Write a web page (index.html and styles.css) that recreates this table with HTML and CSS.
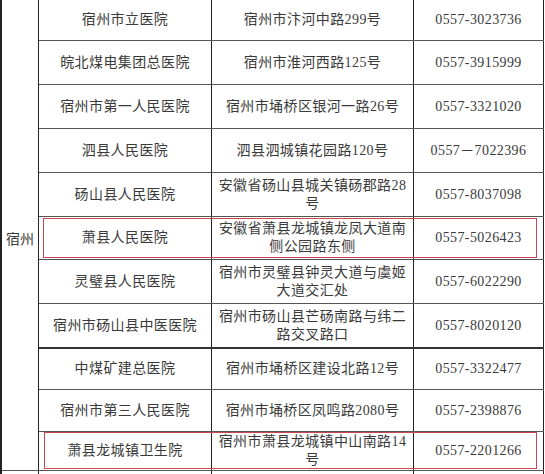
FILE: index.html
```html
<!DOCTYPE html>
<html lang="zh-CN">
<head>
<meta charset="utf-8">
<title>宿州医院</title>
<link rel="stylesheet" href="styles.css">
</head>
<body>
<div class="sheet">
  <div class="region">
    <div class="city">宿州</div>
    <div class="rows">
      <div class="row h41"><div class="cell">宿州市立医院</div><div class="cell">宿州市汴河中路299号</div><div class="cell">0557-3023736</div></div>
      <div class="row"><div class="cell">皖北煤电集团总医院</div><div class="cell">宿州市淮河西路125号</div><div class="cell">0557-3915999</div></div>
      <div class="row"><div class="cell">宿州市第一人民医院</div><div class="cell">宿州市埇桥区银河一路26号</div><div class="cell">0557-3321020</div></div>
      <div class="row"><div class="cell">泗县人民医院</div><div class="cell">泗县泗城镇花园路120号</div><div class="cell">0557－7022396</div></div>
      <div class="row"><div class="cell">砀山县人民医院</div><div class="cell">安徽省砀山县城关镇砀郡路28<br>号</div><div class="cell">0557-8037098</div></div>
      <div class="row h43 marked"><div class="cell">萧县人民医院</div><div class="cell">安徽省萧县龙城镇龙凤大道南<br>侧公园路东侧</div><div class="cell">0557-5026423</div></div>
      <div class="row"><div class="cell">灵璧县人民医院</div><div class="cell">宿州市灵璧县钟灵大道与虞姬<br>大道交汇处</div><div class="cell">0557-6022290</div></div>
      <div class="row h45 strong"><div class="cell">宿州市砀山县中医医院</div><div class="cell">宿州市砀山县芒砀南路与纬二<br>路交叉路口</div><div class="cell">0557-8020120</div></div>
      <div class="row h41"><div class="cell">中煤矿建总医院</div><div class="cell">宿州市埇桥区建设北路12号</div><div class="cell">0557-3322477</div></div>
      <div class="row h42"><div class="cell">宿州市第三人民医院</div><div class="cell">宿州市埇桥区凤鸣路2080号</div><div class="cell">0557-2398876</div></div>
      <div class="row h39 marked marked-last"><div class="cell">萧县龙城镇卫生院</div><div class="cell">宿州市萧县龙城镇中山南路14<br>号</div><div class="cell">0557-2201266</div></div>
    </div>
  </div>
  <div class="tail"><div class="cell"></div><div class="cell"></div><div class="cell"></div><div class="cell"></div></div>
</div>
</body>
</html>
```
FILE: styles.css
```css
html, body {
  margin: 0;
  padding: 0;
  background: #ffffff;
  overflow: hidden;
}

body {
  font-family: "Liberation Serif", "Noto Sans CJK SC", serif;
  font-size: 14px;
  letter-spacing: 0.4px;
  color: #3a3a3a;
}

.sheet {
  width: 544px;
  box-sizing: border-box;
  border-left: 2px solid #222222;
}

.region {
  display: grid;
  grid-template-columns: 37px 1fr;
}

.city {
  box-sizing: border-box;
  border-right: 1px solid #222222;
  border-bottom: 1px solid #555555;
  display: flex;
  align-items: center;
  justify-content: center;
  padding-top: 10px;
  letter-spacing: 0;
  line-height: 18px;
}

.rows {
  display: flex;
  flex-direction: column;
}

.row {
  position: relative;
  box-sizing: border-box;
  height: 44px;
  display: grid;
  grid-template-columns: 173px 202px 1fr;
  border-bottom: 1px solid #555555;
}

.row.h39 { height: 39px; }
.row.h41 { height: 41px; }
.row.h42 { height: 42px; }
.row.h43 { height: 43px; }
.row.h45 { height: 45px; }

.row.strong {
  border-bottom: 2px solid #333333;
}

.cell {
  box-sizing: border-box;
  border-right: 1px solid #222222;
  display: flex;
  align-items: center;
  justify-content: center;
  text-align: center;
  line-height: 18px;
  white-space: nowrap;
}

.row.marked::after {
  content: "";
  position: absolute;
  left: 4px;
  right: 7px;
  top: 1px;
  bottom: 1px;
  border: 1px solid #c9474f;
  pointer-events: none;
}

.row.marked-last::after {
  left: 5px;
  top: 0;
}

.tail {
  display: grid;
  grid-template-columns: 37px 173px 202px 130px;
  height: 12px;
}

.tail .cell {
  border-right: 1px solid #222222;
}
```
